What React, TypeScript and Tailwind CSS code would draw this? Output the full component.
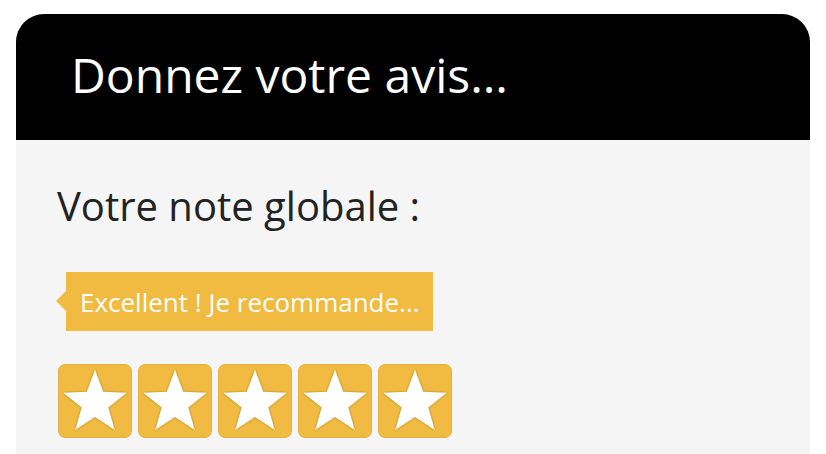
import React from "react";

function Star() {
  return (
    <div className="flex h-[74px] w-[74px] items-center justify-center rounded-[7px] border border-[#e2b04a] bg-[#f0bb40]">
      <svg viewBox="0 0 24 24" className="h-[72px] w-[72px] drop-shadow-[0_0_1px_rgba(120,90,20,0.6)]">
        <path
          d="M12 1.6l2.75 7.35 7.85.3-6.15 4.9 2.15 7.55L12 17.35 5.4 21.7l2.15-7.55L1.4 9.25l7.85-.3z"
          fill="#ffffff"
        />
      </svg>
    </div>
  );
}

export default function App() {
  return (
    <div className="h-[454px] w-[826px] overflow-hidden bg-white pt-[14px] font-['Open_Sans',sans-serif]">
      <div className="mx-[16px] h-full w-[794px]">
        <div className="flex h-[126px] items-center rounded-t-[28px] bg-black pl-[55px] pb-[4px]">
          <h1 className="text-[48px] leading-none text-white">Donnez votre avis...</h1>
        </div>
        <div className="h-full bg-[#f5f5f5] px-[41px] pt-[46px]">
          <h2 className="text-[40px] leading-none text-[#222]">Votre note globale :</h2>
          <div className="relative mt-[46px] ml-[9px] flex h-[59px] w-[367px] items-center bg-[#f0bb40] pl-[14px]">
            <span className="absolute left-[-10px] top-[19px] h-0 w-0 border-y-[10px] border-r-[10px] border-y-transparent border-r-[#f0bb40]" />
            <span className="text-[26px] leading-none text-white">Excellent ! Je recommande...</span>
          </div>
          <div className="mt-[33px] ml-[1px] flex gap-[6px]">
            <Star />
            <Star />
            <Star />
            <Star />
            <Star />
          </div>
        </div>
      </div>
    </div>
  );
}
